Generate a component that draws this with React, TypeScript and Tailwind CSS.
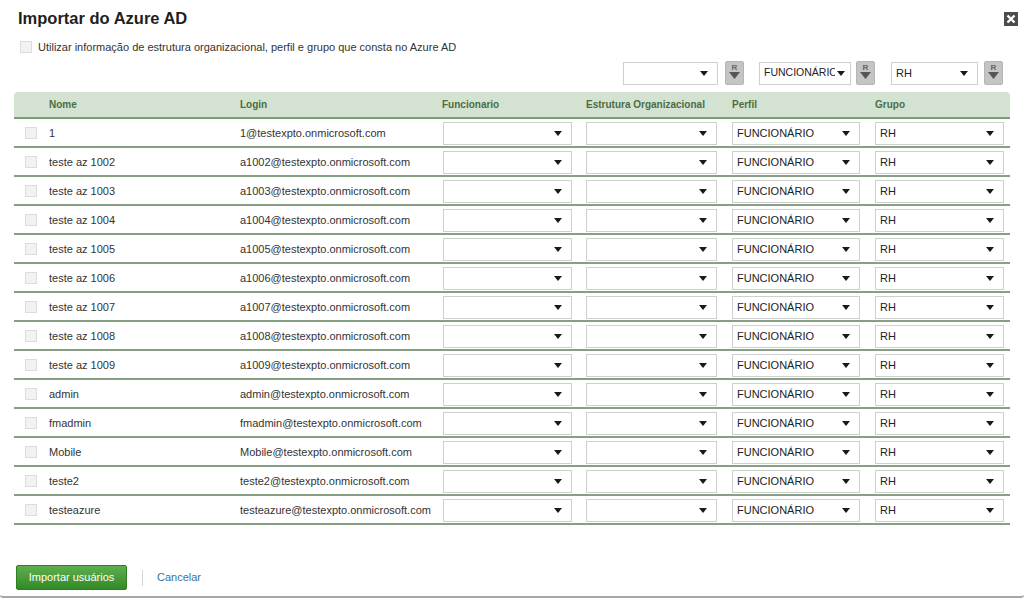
import React from 'react';

const rows = [
  ['1', '1@testexpto.onmicrosoft.com'],
  ['teste az 1002', 'a1002@testexpto.onmicrosoft.com'],
  ['teste az 1003', 'a1003@testexpto.onmicrosoft.com'],
  ['teste az 1004', 'a1004@testexpto.onmicrosoft.com'],
  ['teste az 1005', 'a1005@testexpto.onmicrosoft.com'],
  ['teste az 1006', 'a1006@testexpto.onmicrosoft.com'],
  ['teste az 1007', 'a1007@testexpto.onmicrosoft.com'],
  ['teste az 1008', 'a1008@testexpto.onmicrosoft.com'],
  ['teste az 1009', 'a1009@testexpto.onmicrosoft.com'],
  ['admin', 'admin@testexpto.onmicrosoft.com'],
  ['fmadmin', 'fmadmin@testexpto.onmicrosoft.com'],
  ['Mobile', 'Mobile@testexpto.onmicrosoft.com'],
  ['teste2', 'teste2@testexpto.onmicrosoft.com'],
  ['testeazure', 'testeazure@testexpto.onmicrosoft.com'],
];

const cols = 'grid grid-cols-[35px_191px_202px_144px_146px_143px_135px]';

function Caret() {
  return (
    <svg width="8" height="5" viewBox="0 0 8 5" className="shrink-0">
      <path d="M0 0h8L4 5z" fill="#1a1a1a" />
    </svg>
  );
}

function Select({ value, width, tight }: { value?: string; width: string; tight?: boolean }) {
  return (
    <div
      className={`${width} h-[23px] flex items-center justify-between pl-[4px] ${tight ? 'pr-[5px] gap-[2px] text-[10.5px]' : 'pr-[9px] gap-[4px] text-[11px]'} border border-[#cfcfcf] bg-white text-[#222] overflow-hidden whitespace-nowrap`}
    >
      <span className="overflow-hidden min-w-0">{value}</span>
      <Caret />
    </div>
  );
}

function RButton() {
  return (
    <div className="w-[19px] h-[24px] rounded-[2px] bg-[#c4c4c4] border border-[#b5b5b5] flex flex-col items-center pt-[1px]">
      <span className="text-[8px] leading-[9px] text-[#666] font-bold">R</span>
      <svg width="11" height="7" viewBox="0 0 11 7">
        <path d="M0 0h11L5.5 7z" fill="#555" />
      </svg>
    </div>
  );
}

function Checkbox() {
  return <div className="w-[12px] h-[12px] border border-[#dcdcdc] bg-[#f2f2f2]" />;
}

export default function App() {
  return (
    <div
      className="w-[1024px] h-[598px] bg-white flex flex-col border-b-2 border-[#a6a6a6] rounded-b-[3px] overflow-hidden"
      style={{ fontFamily: 'Tahoma, "Liberation Sans", Arial, sans-serif' }}
    >
      <div className="flex items-start justify-between pl-[18px] pr-[6px] pt-[8px] h-[34px]">
        <h1 className="text-[16.5px] font-bold text-[#1f1f1f] leading-[20px]">Importar do Azure AD</h1>
        <div className="mt-[4px] w-[14px] h-[14px] bg-[#4d4d4d] flex items-center justify-center">
          <svg width="10" height="10" viewBox="0 0 10 10">
            <path d="M1.5 1.5l7 7M8.5 1.5l-7 7" stroke="white" strokeWidth="2.4" />
          </svg>
        </div>
      </div>

      <div className="flex items-center gap-[6px] pl-[20px] h-[26px]">
        <Checkbox />
        <span className="text-[11px] text-[#333]">
          Utilizar informação de estrutura organizacional, perfil e grupo que consta no Azure AD
        </span>
      </div>

      <div className="flex items-center justify-end pr-[21px] mt-[1px] h-[24px]">
        <Select width="w-[95px]" />
        <div className="ml-[7px]">
          <RButton />
        </div>
        <div className="ml-[15px]">
          <Select width="w-[92px]" value="FUNCIONÁRIO" tight />
        </div>
        <div className="ml-[5px]">
          <RButton />
        </div>
        <div className="ml-[16px]">
          <Select width="w-[87px]" value="RH" />
        </div>
        <div className="ml-[6px]">
          <RButton />
        </div>
      </div>

      <div className="mx-[14px] mt-[7px] w-[996px]">
        <div
          className={`${cols} h-[27px] items-center bg-[#d3e2d1] rounded-t-[4px] border-b-2 border-[#7d9a79] text-[10px] font-bold text-[#4b6e45]`}
        >
          <div />
          <div>Nome</div>
          <div>Login</div>
          <div>Funcionario</div>
          <div>Estrutura Organizacional</div>
          <div>Perfil</div>
          <div>Grupo</div>
        </div>
        {rows.map(([name, login]) => (
          <div
            key={login}
            className={`${cols} h-[29px] pt-[1px] items-center border-b-2 border-[#879f83] text-[11px] text-[#333]`}
          >
            <div className="pl-[11px]">
              <Checkbox />
            </div>
            <div>{name}</div>
            <div className="whitespace-nowrap">{login}</div>
            <div className="pl-[1px]">
              <Select width="w-[129px]" />
            </div>
            <div>
              <Select width="w-[131px]" />
            </div>
            <div>
              <Select width="w-[128px]" value="FUNCIONÁRIO" />
            </div>
            <div>
              <Select width="w-[129px]" value="RH" />
            </div>
          </div>
        ))}
      </div>

      <div className="flex items-center pl-[16px] mt-auto mb-[6px]">
        <button className="w-[111px] h-[25px] rounded-[2px] border border-[#2f7d25] bg-gradient-to-b from-[#5fae4f] to-[#2f8a25] text-white text-[11px]">
          Importar usuários
        </button>
        <div className="w-px h-[16px] bg-[#d5d5d5] ml-[15px]" />
        <span className="ml-[14px] text-[11px] text-[#3d6fa6]">Cancelar</span>
      </div>
    </div>
  );
}
